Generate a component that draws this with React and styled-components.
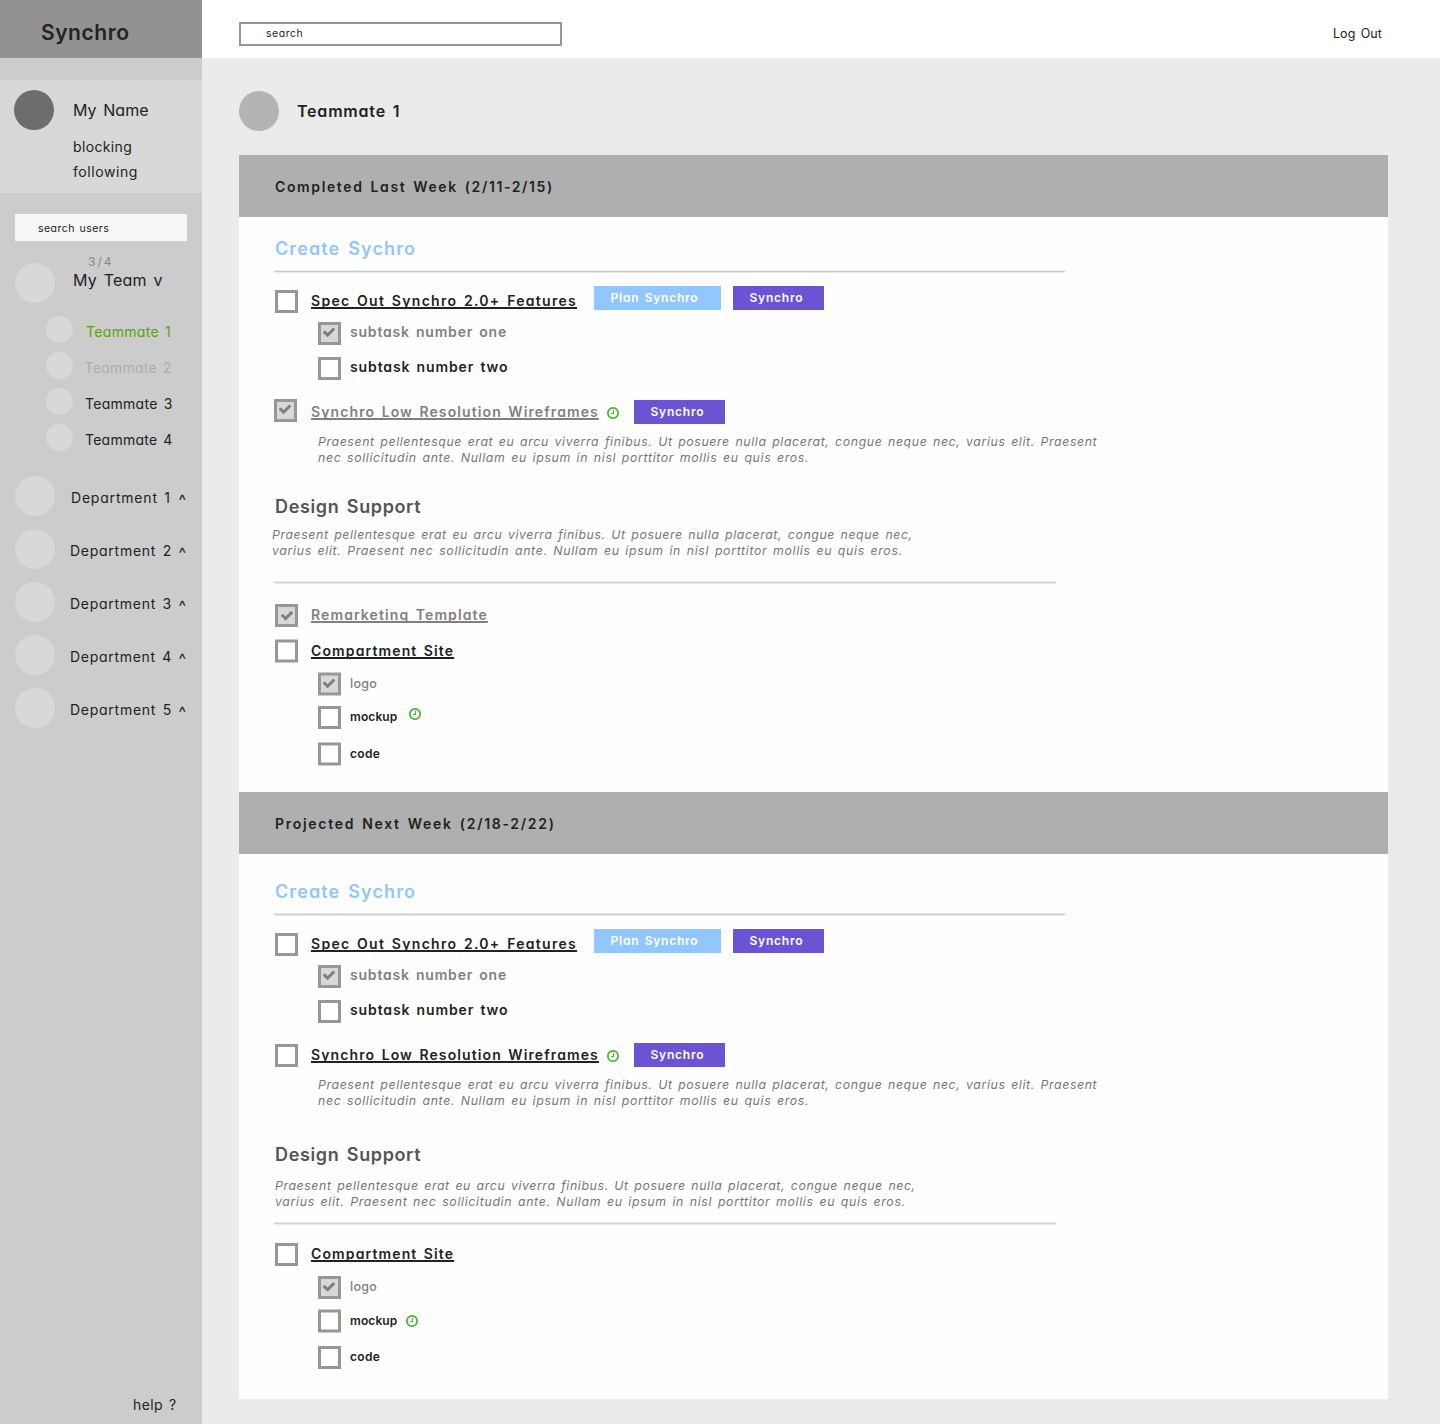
import React from "react";
import styled, { createGlobalStyle } from "styled-components";

const GlobalStyle = createGlobalStyle`
  *, *::before, *::after { box-sizing: border-box; }
  body {
    margin: 0;
    background: #ebebeb;
    color: #222;
    font-family: Inter, Lato, "Liberation Sans", sans-serif;
    font-feature-settings: "cv11" 1;
  }
`;

const Text = styled.span`
  display: block;
  flex: none;
  width: ${(p) => p.$width || "auto"};
  white-space: nowrap;
  word-spacing: 0.13em;
  line-height: 24px;
  font-size: ${(p) => p.$size || 14}px;
  font-weight: ${(p) => p.$weight || 400};
  letter-spacing: ${(p) => p.$track || 0}px;
  color: ${(p) => p.$color || "inherit"};
  margin-top: ${(p) => p.$top || 0}px;
  margin-left: ${(p) => p.$left || 0}px;
`;

const Page = styled.div`
  display: grid;
  grid-template-columns: 202px 1fr;
  width: 1440px;
  height: 1424px;
`;

/* ---------- sidebar ---------- */

const Sidebar = styled.aside`
  display: flex;
  flex-direction: column;
  background: #ccc;
`;

const Brand = styled.div`
  height: 58px;
  padding: 21px 0 0 41px;
  background: #929292;
`;

const Profile = styled.section`
  display: flex;
  height: 113px;
  margin-top: 22px;
  padding: 10px 0 0 14px;
  background: #d8d8d8;
`;

const ProfileLinks = styled.div`
  display: flex;
  flex-direction: column;
  padding: 8px 0 0 19px;
`;

const Avatar = styled.div`
  flex: none;
  width: ${(p) => p.$size}px;
  height: ${(p) => p.$size}px;
  border-radius: 50%;
  background: ${(p) => p.$color || "#d8d8d8"};
`;

const UserSearch = styled.div`
  width: 172px;
  height: 27px;
  margin: 21px 0 0 15px;
  padding: 3px 0 0 23px;
  background: #f6f6f6;
`;

const Team = styled.div`
  display: flex;
  height: 40px;
  margin: 22px 0 0 15px;
`;

const TeamLabel = styled.div`
  margin: -13px 0 0 18px;
`;

const Members = styled.ul`
  display: flex;
  flex-direction: column;
  gap: 9px;
  margin: 13px 0 0 46px;
  padding: 0;
  list-style: none;
`;

const Member = styled.li`
  display: flex;
  height: 27px;
`;

const Departments = styled.ul`
  display: flex;
  flex-direction: column;
  gap: 13px;
  margin: 25px 0 0 15px;
  padding: 0;
  list-style: none;
`;

const Department = styled.li`
  display: flex;
  width: 171px;
  height: 40px;
`;

const Caret = styled(Text)`
  margin-left: auto;
`;

const Help = styled.div`
  margin: auto 0 7px 133px;
`;

/* ---------- main column ---------- */

const Main = styled.main`
  display: flex;
  flex-direction: column;
`;

const TopBar = styled.header`
  display: flex;
  justify-content: space-between;
  height: 58px;
  padding: 22px 58px 0 37px;
  background: #fff;
`;

const SearchBox = styled.div`
  width: 323px;
  height: 24px;
  padding-left: 25px;
  border: 2px solid #979797;
`;

const PersonHeading = styled.div`
  display: flex;
  height: 64px;
  margin: 33px 0 0 37px;
`;

const Board = styled.div`
  width: 1149px;
  height: 1244px;
  margin-left: 37px;
  background: #fefefe;
`;

const Week = styled.section`
  height: ${(p) => p.$height}px;
`;

const WeekBar = styled.div`
  height: 62px;
  padding: 20px 0 0 36px;
  background: #afafaf;
`;

const GroupTitle = styled.h2`
  height: 24px;
  margin: ${(p) => p.$gap}px 0 0 36px;
  font-size: 18px;
  line-height: 24px;
  font-weight: 600;
  word-spacing: 0.13em;
  letter-spacing: ${(p) => p.$track}px;
  color: ${(p) => p.$color};
`;

const Divider = styled.div`
  width: ${(p) => p.$width}px;
  height: 3px;
  margin: ${(p) => p.$gap}px 0 0 35px;
  background: ${(p) => p.$color || "#ccc"};
  border: solid #e9e9e9;
  border-width: 1px 0;
`;

const TaskRow = styled.div`
  display: flex;
  align-items: flex-start;
  height: 24px;
  margin-top: ${(p) => p.$gap}px;
  padding-left: ${(p) => p.$indent || 36}px;
`;

const TaskTitle = styled(Text)`
  font-weight: 600;

  span {
    text-decoration: underline;
    text-decoration-thickness: 2px;
    text-underline-offset: 1px;
    text-decoration-skip-ink: none;
  }
`;

const Tag = styled.div`
  flex: none;
  width: ${(p) => p.$width}px;
  height: 24px;
  margin: ${(p) => p.$top}px 0 0 ${(p) => p.$left || 0}px;
  padding-left: 16.5px;
  color: #fff;
  background: ${(p) => p.$color};
`;

const Note = styled.p`
  height: 32px;
  margin: ${(p) => p.$gap}px 0 0 ${(p) => p.$indent}px;
  color: #777;
  font-style: italic;
`;

const NoteLine = styled(Text)`
  font-size: 12.3px;
  line-height: 16px;
`;

const Icon = styled.svg`
  display: block;
  flex: none;
  margin: ${(p) => p.$top || 0}px 0 0 ${(p) => p.$left || 0}px;
`;

const CHECK =
  "M1671 566q0 40-28 68l-724 724-136 136q-28 28-68 28t-68-28l-136-136-362-362q-28-28-28-68t28-68l136-136q28-28 68-28t68 28l294 295 656-657q28-28 68-28t68 28l136 136q28 28 28 68z";
const CLOCK =
  "M1024 544v448q0 14-9 23t-23 9h-320q-14 0-23-9t-9-23v-64q0-14 9-23t23-9h224v-352q0-14 9-23t23-9h64q14 0 23 9t9 23zm416 352q0-148-73-273t-198-198-273-73-273 73-198 198-73 273 73 273 198 198 273 73 273-73 198-198 73-273zm224 0q0 209-103 385.5t-279.5 279.5-385.5 103-385.5-103-279.5-279.5-103-385.5 103-385.5 279.5-279.5 385.5-103 385.5 103 279.5 279.5 103 385.5z";

function Checkbox({ done, drop = 0, cx = 4, cy = 3.1 }) {
  return (
    <Icon width="23" height="24" viewBox="0 0 23 24">
      <rect
        x="1.5"
        y={1.5 + drop}
        width="20"
        height="20"
        fill={done ? "#d8d8d8" : "#fff"}
        stroke="#979797"
        strokeWidth="3"
      />
      {done && (
        <path d={CHECK} fill="#7f7f7f" transform={`translate(${cx} ${cy}) scale(0.0078125)`} />
      )}
    </Icon>
  );
}

function Clock(props) {
  return (
    <Icon width="12" height="12" viewBox="128 128 1536 1536" {...props}>
      <path d={CLOCK} fill="#4cb535" />
    </Icon>
  );
}

const GREY = "#808080";
const PURPLE = "#6b54d3";
const SKY = "#92c6ff";

function CreateSynchro({ gap, wireframesDone }) {
  return (
    <>
      <GroupTitle $gap={gap} $track={1.1} $color={SKY}>Create Sychro</GroupTitle>
      <Divider $width={791} $gap={9} />

      <TaskRow $gap={17}>
        <Checkbox />
        <TaskTitle $left={13} $top={-1} $track={1.29} $width="283px">
          <span>Spec Out Synchro 2.0+ Features</span>
        </TaskTitle>
        <Tag $width={127} $top={-4} $color={SKY}>
          <Text $size={12} $weight={600} $track={0.77}>Plan Synchro</Text>
        </Tag>
        <Tag $width={91} $top={-4} $left={12} $color={PURPLE}>
          <Text $size={12} $weight={600} $track={0.78}>Synchro</Text>
        </Tag>
      </TaskRow>
      <TaskRow $gap={8} $indent={79}>
        <Checkbox done />
        <Text $left={9} $top={-2} $weight={600} $track={0.8} $color={GREY}>subtask number one</Text>
      </TaskRow>
      <TaskRow $gap={11} $indent={79}>
        <Checkbox />
        <Text $left={9} $top={-2} $weight={600} $track={0.88}>subtask number two</Text>
      </TaskRow>

      <TaskRow $gap={wireframesDone ? 18 : 20} $indent={wireframesDone ? 35 : 36}>
        <Checkbox done={wireframesDone} />
        <TaskTitle
          $left={wireframesDone ? 14 : 13}
          $top={wireframesDone ? 1 : -1}
          $track={1.11}
          $width="296px"
          $color={wireframesDone ? GREY : undefined}
        >
          <span>Synchro Low Resolution Wireframes</span>
        </TaskTitle>
        <Clock $top={wireframesDone ? 8 : 6} />
        <Tag $width={91} $top={wireframesDone ? 1 : -1} $left={15} $color={PURPLE}>
          <Text $size={12} $weight={600} $track={0.78}>Synchro</Text>
        </Tag>
      </TaskRow>
      <Note $gap={wireframesDone ? 11 : 9} $indent={79}>
        <NoteLine $track={0.612}>
          Praesent pellentesque erat eu arcu viverra finibus. Ut posuere nulla placerat, congue neque nec, varius elit. Praesent
        </NoteLine>
        <NoteLine $track={0.65}>
          nec sollicitudin ante. Nullam eu ipsum in nisl porttitor mollis eu quis eros.
        </NoteLine>
      </Note>
    </>
  );
}

function DesignSupport({ gap, noteGap, noteIndent, dividerGap }) {
  return (
    <>
      <GroupTitle $gap={gap} $track={0.63} $color="#555">Design Support</GroupTitle>
      <Note $gap={noteGap} $indent={noteIndent}>
        <NoteLine $track={0.595}>
          Praesent pellentesque erat eu arcu viverra finibus. Ut posuere nulla placerat, congue neque nec,
        </NoteLine>
        <NoteLine $track={0.67}>
          varius elit. Praesent nec sollicitudin ante. Nullam eu ipsum in nisl porttitor mollis eu quis eros.
        </NoteLine>
      </Note>
      <Divider $width={782} $gap={dividerGap} $color="#d2d2d2" />
    </>
  );
}

const members = [
  { name: "Teammate 1", color: "#58a50c", track: 0.33, left: 13 },
  { name: "Teammate 2", color: "#adadad", track: 0.26, left: 11.5 },
  { name: "Teammate 3", track: 0.28, left: 12 },
  { name: "Teammate 4", track: 0.24, left: 12 },
];

const departments = [
  { name: "Department 1", track: 0.8, left: 16 },
  { name: "Department 2", track: 0.74, left: 15 },
  { name: "Department 3", track: 0.73, left: 15 },
  { name: "Department 4", track: 0.7, left: 15 },
  { name: "Department 5", track: 0.74, left: 15 },
];

export default function App() {
  return (
    <Page>
      <GlobalStyle />
      <Sidebar>
        <Brand>
          <Text $size={21} $weight={600} $track={0.55}>Synchro</Text>
        </Brand>
        <Profile>
          <Avatar $size={40} $color="#6d6d6d" />
          <ProfileLinks>
            <Text $size={16} $track={0.05}>My Name</Text>
            <Text $top={13} $track={0.36}>blocking</Text>
            <Text $top={1} $track={0.58}>following</Text>
          </ProfileLinks>
        </Profile>
        <UserSearch>
          <Text $size={10.5} $track={0.46}>search users</Text>
        </UserSearch>
        <Team>
          <Avatar $size={40} />
          <TeamLabel>
            <Text $size={12} $track={2} $left={15} $color="#888">3/4</Text>
            <Text $size={16} $track={0.2} $top={-6}>My Team v</Text>
          </TeamLabel>
        </Team>
        <Members>
          {members.map((m) => (
            <Member key={m.name}>
              <Avatar $size={27} />
              <Text $left={m.left} $top={4} $track={m.track} $color={m.color}>{m.name}</Text>
            </Member>
          ))}
        </Members>
        <Departments>
          {departments.map((d) => (
            <Department key={d.name}>
              <Avatar $size={40} />
              <Text $left={d.left} $top={10} $track={d.track}>{d.name}</Text>
              <Caret $top={12} $size={16}>^</Caret>
            </Department>
          ))}
        </Departments>
        <Help>
          <Text $track={0.38}>help ?</Text>
        </Help>
      </Sidebar>

      <Main>
        <TopBar>
          <SearchBox>
            <Text $size={10.5} $track={0.52} $top={-2}>search</Text>
          </SearchBox>
          <Text $size={12.5} $track={0.1}>Log Out</Text>
        </TopBar>
        <PersonHeading>
          <Avatar $size={40} $color="#b4b4b4" />
          <Text $size={16} $weight={600} $track={0.8} $left={18} $top={8}>Teammate 1</Text>
        </PersonHeading>

        <Board>
          <Week $height={637}>
            <WeekBar>
              <Text $weight={600} $track={1.62}>Completed Last Week (2/11-2/15)</Text>
            </WeekBar>
            <CreateSynchro gap={20} wireframesDone />
            <DesignSupport gap={29} noteGap={8} noteIndent={33} dividerGap={22} />
            <TaskRow $gap={20}>
              <Checkbox done cx={5} cy={4.5} />
              <TaskTitle $left={13} $top={-1} $track={1.1} $color={GREY}>
                <span>Remarketing Template</span>
              </TaskTitle>
            </TaskRow>
            <TaskRow $gap={11}>
              <Checkbox drop={0.5} />
              <TaskTitle $left={13} $track={1.12}>
                <span>Compartment Site</span>
              </TaskTitle>
            </TaskRow>
            <TaskRow $gap={9} $indent={79}>
              <Checkbox done drop={0.5} cy={4.2} />
              <Text $left={9} $size={12.5} $weight={500} $track={0.25} $color={GREY}>logo</Text>
            </TaskRow>
            <TaskRow $gap={10} $indent={79}>
              <Checkbox />
              <Text $left={9} $top={-1} $size={12} $weight={600} $track={0.1} $width="48px">mockup</Text>
              <Clock $top={2} $left={11} />
            </TaskRow>
            <TaskRow $gap={12} $indent={79}>
              <Checkbox drop={0.5} />
              <Text $left={9} $size={12} $weight={600} $track={0.3}>code</Text>
            </TaskRow>
          </Week>

          <Week $height={607}>
            <WeekBar>
              <Text $weight={600} $track={1.71}>Projected Next Week (2/18-2/22)</Text>
            </WeekBar>
            <CreateSynchro gap={26} />
            <DesignSupport gap={34} noteGap={11} noteIndent={36} dividerGap={12} />
            <TaskRow $gap={18}>
              <Checkbox />
              <TaskTitle $left={13} $top={-1} $track={1.12}>
                <span>Compartment Site</span>
              </TaskTitle>
            </TaskRow>
            <TaskRow $gap={9} $indent={79}>
              <Checkbox done cy={3.6} />
              <Text $left={9} $top={-1} $size={12.5} $weight={500} $track={0.25} $color={GREY}>logo</Text>
            </TaskRow>
            <TaskRow $gap={9} $indent={79}>
              <Checkbox drop={0.5} />
              <Text $left={9} $size={12} $weight={600} $track={0.1} $width="48px">mockup</Text>
              <Clock $top={6} $left={8} />
            </TaskRow>
            <TaskRow $gap={13} $indent={79}>
              <Checkbox />
              <Text $left={9} $top={-1} $size={12} $weight={600} $track={0.3}>code</Text>
            </TaskRow>
          </Week>
        </Board>
      </Main>
    </Page>
  );
}
